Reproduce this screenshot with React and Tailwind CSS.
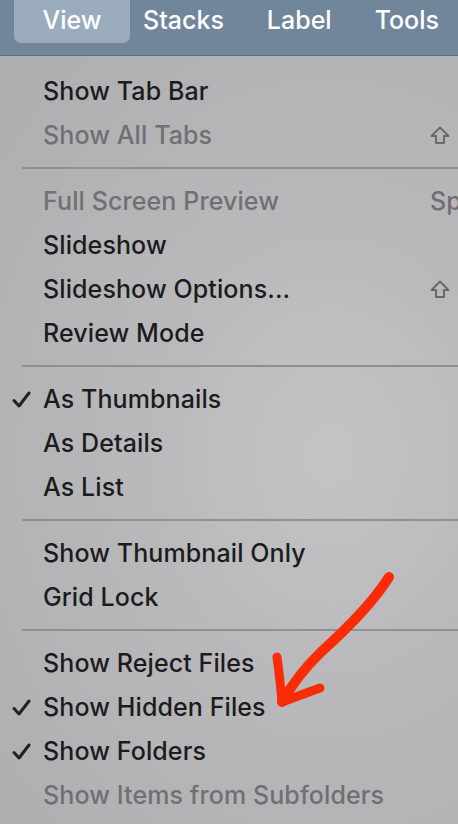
import React from "react";

const font = { fontFamily: "Inter, 'Noto Sans', sans-serif" };

function Shift() {
  return (
    <svg width="20" height="19" viewBox="0 0 20 19" fill="none">
      <path d="M10 1.5 L18.5 10 H14 V17 H6 V10 H1.5 Z" stroke="#6a6a6c" strokeWidth="2" strokeLinejoin="round" />
    </svg>
  );
}

function Check() {
  return (
    <svg width="19" height="17" viewBox="0 0 19 17" fill="none">
      <path d="M2 9.5 L7 15 L17 2" stroke="#222" strokeWidth="3" strokeLinecap="round" strokeLinejoin="round" />
    </svg>
  );
}

function Row({ label, disabled, checked, shortcut }) {
  return (
    <div className="flex h-[44px] items-center">
      <div className="flex w-[43px] shrink-0 items-center pl-[12px]">{checked ? <Check /> : null}</div>
      <div className={"flex-1 whitespace-nowrap text-[25px] leading-[30px] font-[450] tracking-[0.1px] " + (disabled ? "text-[#707073]" : "text-[#1c1c1e]")}>{label}</div>
      <div className="w-[28px] shrink-0 whitespace-nowrap text-[25px] leading-[30px] font-[450] text-[#707073]">{shortcut}</div>
    </div>
  );
}

function Sep() {
  return (
    <div className="flex h-[22px] items-center pl-[22px]">
      <div className="h-[2px] w-full bg-[#909093]" />
    </div>
  );
}

export default function App() {
  return (
    <div className="relative h-[824px] w-[458px] overflow-hidden" style={font}>
      <div className="flex h-[56px] items-start border-b border-[#5d6d7d] bg-[#72869b] text-[25px] font-[450] leading-[30px] text-white">
        <div className="ml-[-48px] flex h-[38px] w-[51px] items-center overflow-hidden whitespace-nowrap">Edit</div>
        <div className="ml-[11px] flex h-[43px] w-[116px] items-center justify-center rounded-b-[7px] bg-[#9aabbd] pb-[4px]">View</div>
        <div className="ml-[13px] flex h-[43px] items-center pb-[4px]">Stacks</div>
        <div className="ml-[43px] flex h-[43px] items-center pb-[4px]">Label</div>
        <div className="ml-[43px] flex h-[43px] items-center pb-[4px]">Tools</div>
      </div>
      <div className="h-[768px] bg-[radial-gradient(ellipse_at_72%_52%,#c5c3c4_0%,#b9b9bb_40%,#aeaeb1_100%)] pt-[13px]">
        <Row label="Show Tab Bar" />
        <Row label="Show All Tabs" disabled shortcut={<Shift />} />
        <Sep />
        <Row label="Full Screen Preview" disabled shortcut="Space" />
        <Row label="Slideshow" />
        <Row label="Slideshow Options..." shortcut={<Shift />} />
        <Row label="Review Mode" />
        <Sep />
        <Row label="As Thumbnails" checked />
        <Row label="As Details" />
        <Row label="As List" />
        <Sep />
        <Row label="Show Thumbnail Only" />
        <Row label="Grid Lock" />
        <Sep />
        <Row label="Show Reject Files" />
        <Row label="Show Hidden Files" checked />
        <Row label="Show Folders" checked />
        <Row label="Show Items from Subfolders" disabled />
      </div>
      <svg className="pointer-events-none absolute left-0 top-0" width="458" height="824" viewBox="0 0 458 824" fill="none">
        <path d="M389 577 C 376 598, 351 625, 321 652 C 301 671, 290 688, 282 702" stroke="#fb2b07" strokeWidth="10" strokeLinecap="round" strokeLinejoin="round" />
        <path d="M277 657 C 279 672, 281 690, 282 702 L 320 688" stroke="#fb2b07" strokeWidth="9" strokeLinecap="round" strokeLinejoin="round" />
      </svg>
    </div>
  );
}
